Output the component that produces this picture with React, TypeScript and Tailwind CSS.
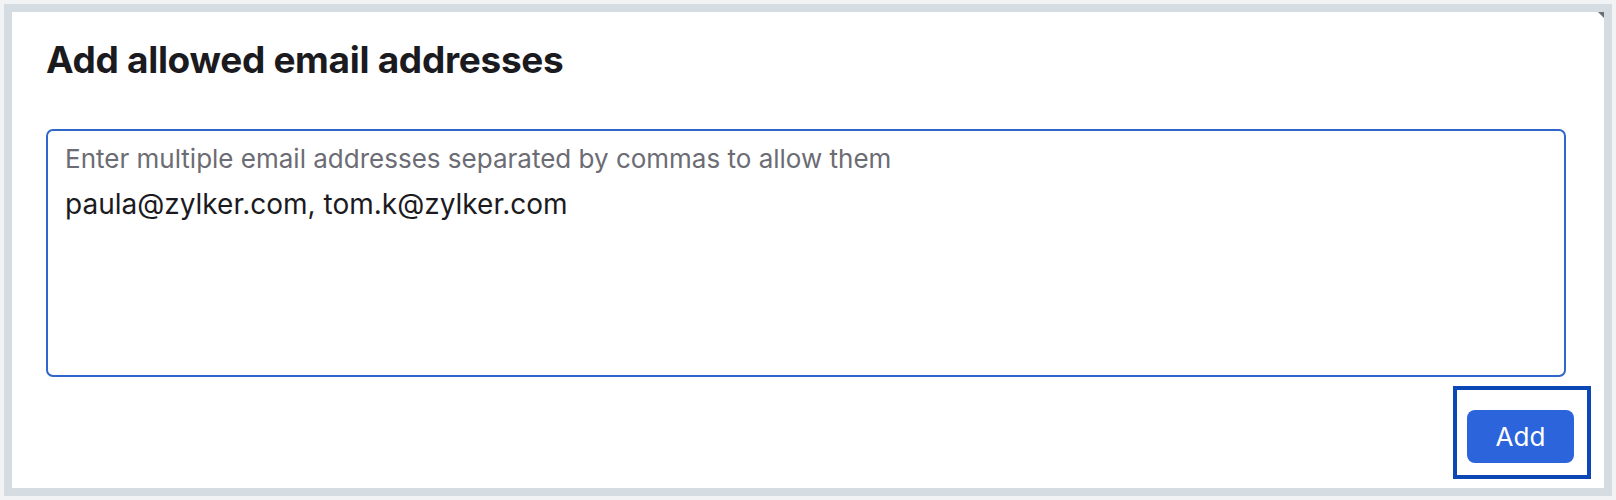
import React from 'react';

const App = () => {
  return (
    <div className="w-[1616px] h-[500px] bg-[#f1f3f5] p-[4px]" style={{ fontFamily: 'Inter, "Open Sans", sans-serif' }}>
      <div className="h-full border-[8px] border-[#d5dde3] bg-white">
        {/* Card */}
        <div className="relative h-full pl-[34px] pr-[38px] pt-[28px] pb-[8px] flex flex-col">
          <span className="absolute right-0 top-0 w-0 h-0 border-l-[6px] border-l-transparent border-t-[6px] border-t-[#6b6f73]" />
          <h2 className="text-[37px] leading-[40px] font-bold text-[#1b1b1f] tracking-[-0.3px]">
            Add allowed email addresses
          </h2>

          <div className="mt-[49px] h-[248px] border-2 border-[#2f66c9] rounded-[7px] px-[17px] pt-[12px]">
            <p className="text-[26px] leading-[32px] text-[#6c6c74]">
              Enter multiple email addresses separated by commas to allow them
            </p>
            <p className="mt-[13px] text-[28px] leading-[32px] text-[#1b1b1f]">
              paula@zylker.com, tom.k@zylker.com
            </p>
          </div>

          <div className="flex justify-end mt-[9px] -mr-[25px]">
            <div className="border-4 border-[#0b47b5] pt-[20px] pb-[12px] pl-[10px] pr-[13px]">
              <button className="w-[107px] h-[53px] rounded-[8px] bg-[#2c64dc] text-white text-[26px] leading-none">
                Add
              </button>
            </div>
          </div>
        </div>
      </div>
    </div>
  );
};

export default App;
